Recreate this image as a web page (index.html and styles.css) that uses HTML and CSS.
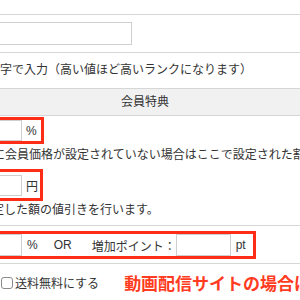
FILE: index.html
```html
<!DOCTYPE html>
<html lang="ja">
<head>
<meta charset="utf-8">
<link rel="stylesheet" href="styles.css">
</head>
<body>
<div class="sheet">
  <div class="row row-top">
    <span class="field field-wide"></span>
  </div>
  <div class="row row-note">
    <p class="note">字で入力（高い値ほど高いランクになります）</p>
  </div>
  <div class="row row-head">会員特典</div>
  <div class="row row-benefit">
    <div class="mark mark-rate">
      <span class="field field-short"></span><span class="unit">%</span>
    </div>
    <p class="note note-rate">に会員価格が設定されていない場合はここで設定された割引率</p>
    <div class="mark mark-yen">
      <span class="field field-short"></span><span class="unit">円</span>
    </div>
    <p class="note note-yen">定した額の値引きを行います。</p>
  </div>
  <div class="row row-point">
    <div class="mark mark-wide">
      <span class="field field-short"></span>
      <span class="unit">%</span>
      <span class="or">OR</span>
      <span class="plus">増加ポイント：</span>
      <span class="field field-point"></span>
      <span class="unit">pt</span>
    </div>
  </div>
  <div class="row row-ship">
    <label class="ship"><span class="check"></span>送料無料にする</label>
    <span class="callout">動画配信サイトの場合は</span>
  </div>
</div>
</body>
</html>
```

FILE: styles.css
```css
* { box-sizing: border-box; }
html, body {
  margin: 0;
  padding: 0;
  width: 300px;
  height: 300px;
  overflow: hidden;
  background: #fff;
}
body {
  font-family: "Liberation Sans", "Noto Sans CJK JP", sans-serif;
  font-size: 12px;
  color: #333;
}
.sheet {
  padding-top: 14px;
  width: 300px;
  white-space: nowrap;
}
.row {
  border-top: 1px solid #d6d6d6;
}
.field {
  display: block;
  height: 23px;
  border: 1px solid #cfcfcf;
  background: #fff;
}
.row-top {
  padding: 7px 0 7px;
}
.field-wide {
  width: 142px;
  margin-left: -10px;
}
.row-note {
  padding: 8px 0 9px;
}
.note {
  margin: 0;
  line-height: 18px;
}
.row-head {
  height: 28px;
  line-height: 26px;
  background: #f1f1f1;
  border-bottom: 1px solid #d6d6d6;
  text-align: center;
  padding-right: 10px;
}
.row-head + .row { border-top: 0; }
.row-benefit {
  padding: 1px 0 3px;
}
.mark {
  display: flex;
  align-items: center;
  width: max-content;
  border: 3px solid #ff2d16;
  margin-left: -43px;
}
.mark-rate {
  height: 27px;
  padding: 0 4px 0 2px;
}
.field-short {
  width: 60px;
  height: 21px;
}
.unit {
  margin-left: 4px;
}
.note-rate {
  margin-top: 2px;
  text-indent: -7px;
}
.mark-yen {
  height: 32px;
  margin-top: 5px;
  padding: 0 2px 0 2px;
}
.note-yen {
  text-indent: -8px;
}
.row-point {
  padding: 5px 0 4px;
  margin-top: 3px;
}
.mark-wide {
  height: 28px;
  padding: 0 7px 0 2px;
}
.mark-wide .field-short { height: 22px; }
.mark-wide .unit { margin-left: 5px; }
.or { margin-left: 16px; }
.plus { margin-left: 20px; }
.field-point {
  width: 55px;
  height: 22px;
}
.row-ship {
  display: flex;
  align-items: center;
  height: 38px;
}
.ship {
  display: flex;
  align-items: center;
}
.check {
  width: 12px;
  height: 12px;
  margin: 0 2px 0 1px;
  border: 1px solid #8a8a8a;
  border-radius: 3px;
  background: #fff;
}
.callout {
  margin-left: 25px;
  font-family: "Noto Sans CJK JP", sans-serif;
  font-weight: 700;
  font-size: 17px;
  color: #ff3b22;
}
```
